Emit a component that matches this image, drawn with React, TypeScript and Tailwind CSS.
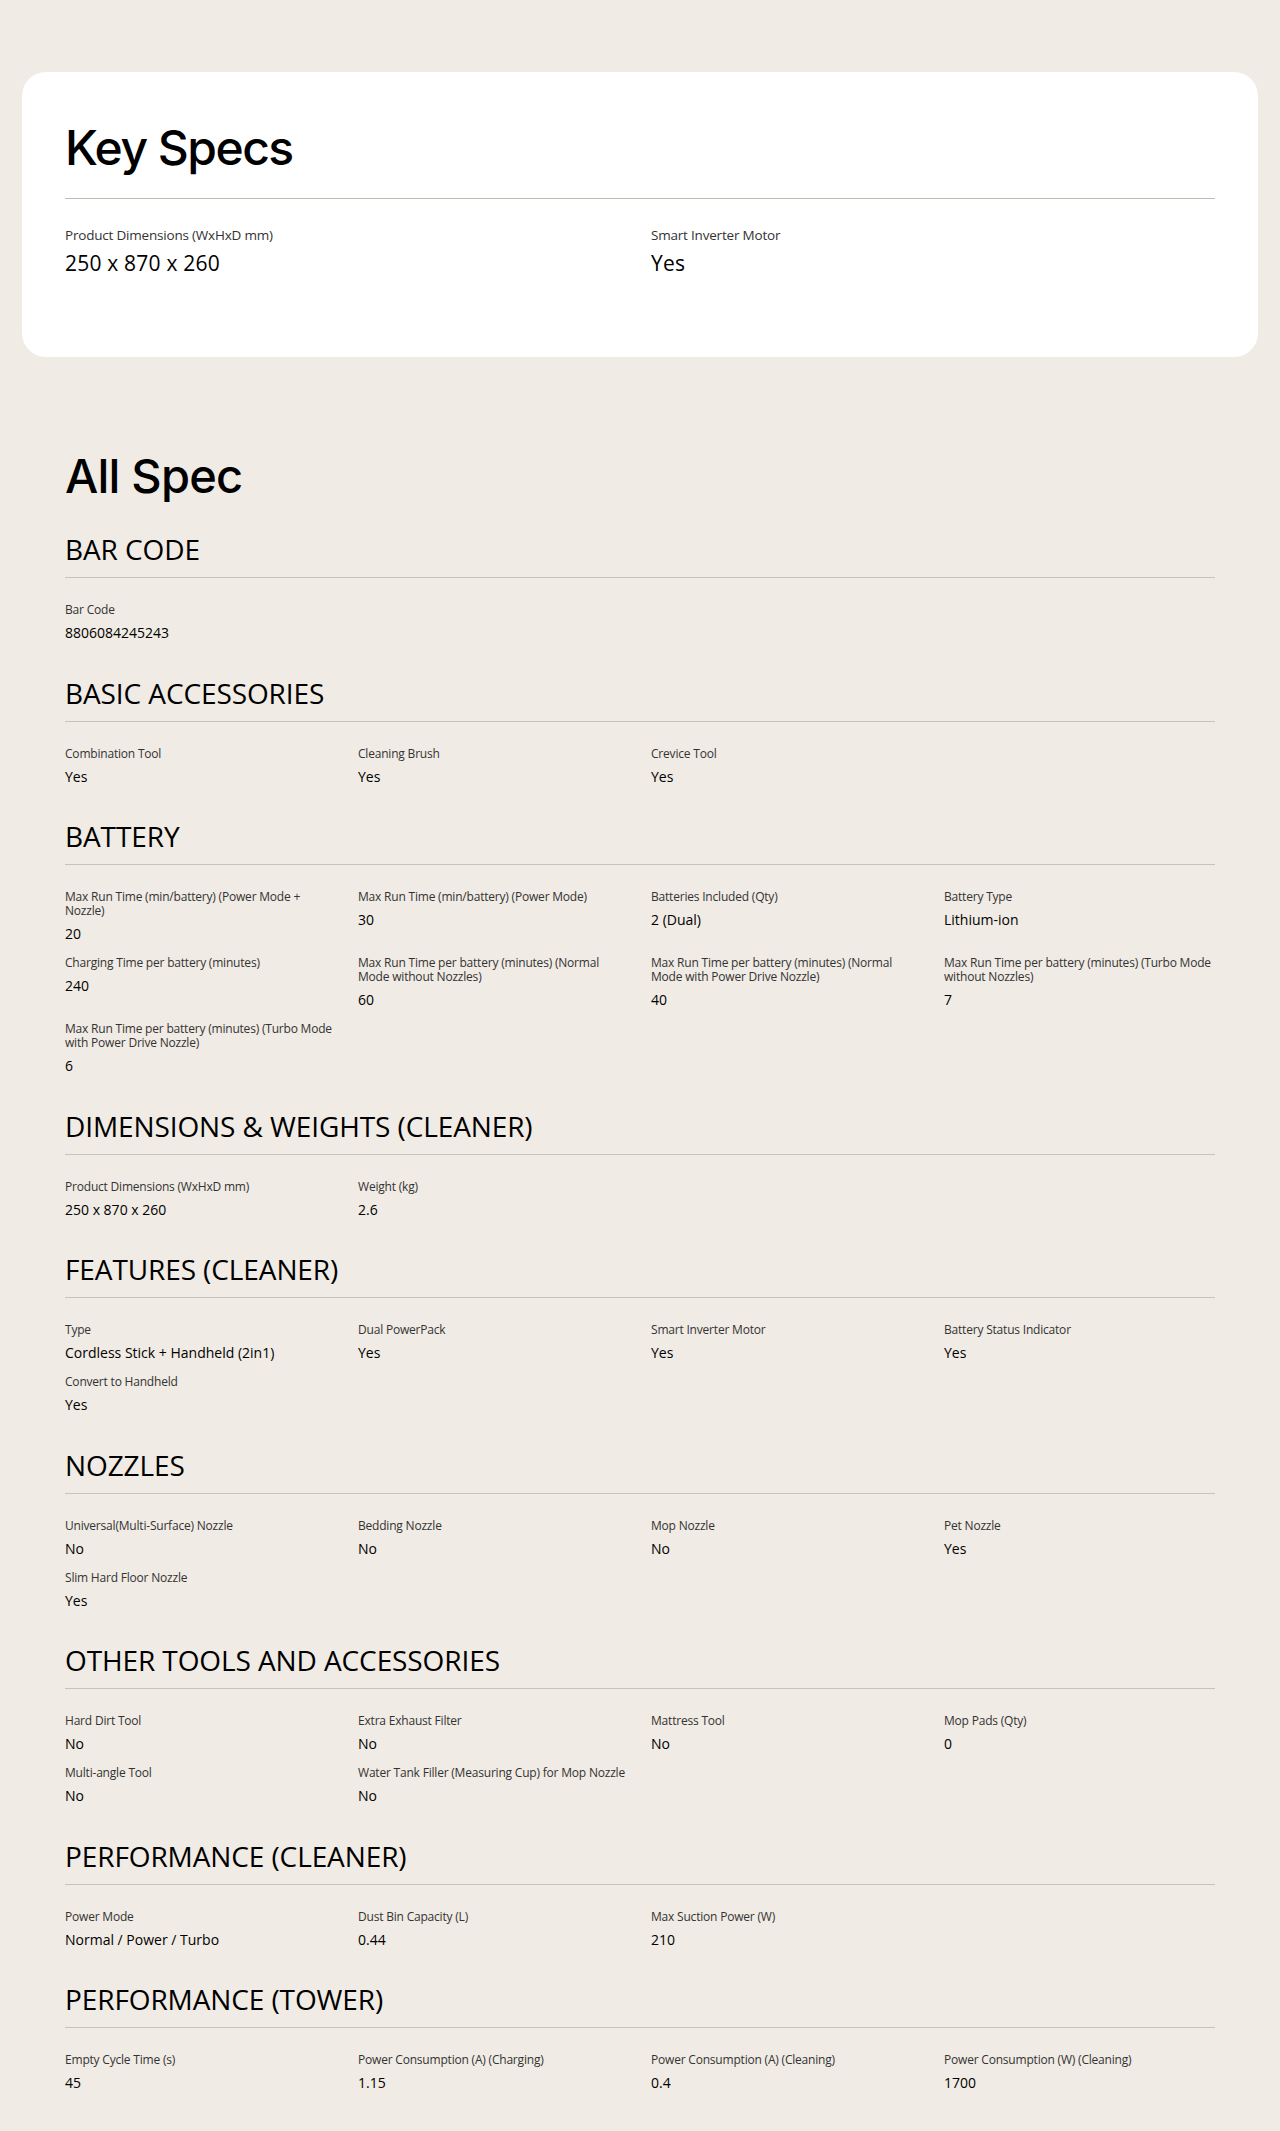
type Spec = { label: string; value: string };
type Section = { title: string; specs: Spec[] };

const keySpecs: Spec[] = [
  { label: "Product Dimensions (WxHxD mm)", value: "250 x 870 x 260" },
  { label: "Smart Inverter Motor", value: "Yes" },
];

const sections: Section[] = [
  { title: "BAR CODE", specs: [{ label: "Bar Code", value: "8806084245243" }] },
  {
    title: "BASIC ACCESSORIES",
    specs: [
      { label: "Combination Tool", value: "Yes" },
      { label: "Cleaning Brush", value: "Yes" },
      { label: "Crevice Tool", value: "Yes" },
    ],
  },
  {
    title: "BATTERY",
    specs: [
      { label: "Max Run Time (min/battery) (Power Mode + Nozzle)", value: "20" },
      { label: "Max Run Time (min/battery) (Power Mode)", value: "30" },
      { label: "Batteries Included (Qty)", value: "2 (Dual)" },
      { label: "Battery Type", value: "Lithium-ion" },
      { label: "Charging Time per battery (minutes)", value: "240" },
      { label: "Max Run Time per battery (minutes) (Normal Mode without Nozzles)", value: "60" },
      { label: "Max Run Time per battery (minutes) (Normal Mode with Power Drive Nozzle)", value: "40" },
      { label: "Max Run Time per battery (minutes) (Turbo Mode without Nozzles)", value: "7" },
      { label: "Max Run Time per battery (minutes) (Turbo Mode with Power Drive Nozzle)", value: "6" },
    ],
  },
  {
    title: "DIMENSIONS & WEIGHTS (CLEANER)",
    specs: [
      { label: "Product Dimensions (WxHxD mm)", value: "250 x 870 x 260" },
      { label: "Weight (kg)", value: "2.6" },
    ],
  },
  {
    title: "FEATURES (CLEANER)",
    specs: [
      { label: "Type", value: "Cordless Stick + Handheld (2in1)" },
      { label: "Dual PowerPack", value: "Yes" },
      { label: "Smart Inverter Motor", value: "Yes" },
      { label: "Battery Status Indicator", value: "Yes" },
      { label: "Convert to Handheld", value: "Yes" },
    ],
  },
  {
    title: "NOZZLES",
    specs: [
      { label: "Universal(Multi-Surface) Nozzle", value: "No" },
      { label: "Bedding Nozzle", value: "No" },
      { label: "Mop Nozzle", value: "No" },
      { label: "Pet Nozzle", value: "Yes" },
      { label: "Slim Hard Floor Nozzle", value: "Yes" },
    ],
  },
  {
    title: "OTHER TOOLS AND ACCESSORIES",
    specs: [
      { label: "Hard Dirt Tool", value: "No" },
      { label: "Extra Exhaust Filter", value: "No" },
      { label: "Mattress Tool", value: "No" },
      { label: "Mop Pads (Qty)", value: "0" },
      { label: "Multi-angle Tool", value: "No" },
      { label: "Water Tank Filler (Measuring Cup) for Mop Nozzle", value: "No" },
    ],
  },
  {
    title: "PERFORMANCE (CLEANER)",
    specs: [
      { label: "Power Mode", value: "Normal / Power / Turbo" },
      { label: "Dust Bin Capacity (L)", value: "0.44" },
      { label: "Max Suction Power (W)", value: "210" },
    ],
  },
  {
    title: "PERFORMANCE (TOWER)",
    specs: [
      { label: "Empty Cycle Time (s)", value: "45" },
      { label: "Power Consumption (A) (Charging)", value: "1.15" },
      { label: "Power Consumption (A) (Cleaning)", value: "0.4" },
      { label: "Power Consumption (W) (Cleaning)", value: "1700" },
    ],
  },
];

const SpecSection = ({ title, specs }: Section) => {
  return (
    <div className="mb-[31.5px]">
      <h3 className="text-[28px] leading-[36px] tracking-[-0.1px] text-black">{title}</h3>
      <div className="mt-[10px] border-t border-[#c6c3bc]" />
      <div className="mt-[25px] grid grid-cols-4 gap-x-[22px] gap-y-[12px]">
        {specs.map((spec) => (
          <div key={spec.label} className="flex flex-col">
            <p className="text-[12px] leading-[14px] tracking-[-0.2px] text-[#333333]">{spec.label}</p>
            <p className="mt-[6px] text-[14px] leading-[20px] text-black">{spec.value}</p>
          </div>
        ))}
      </div>
    </div>
  );
};

export default function App() {
  return (
    <div
      className="min-h-[2131px] bg-[#f0ebe4] pt-[72px] pb-[10px]"
      style={{ fontFamily: '"Open Sans", "Noto Sans", sans-serif' }}
    >
      <div className="mx-[22px] rounded-[24px] bg-white px-[43px] pt-[48px] pb-[80px]">
        <h2
          className="text-[48px] leading-[56px] font-medium tracking-[-1.5px] text-black"
          style={{ fontFamily: "Inter, sans-serif" }}
        >
          Key Specs
        </h2>
        <div className="mt-[22px] border-t border-[#bdbcae]" />
        <div className="mt-[26px] grid grid-cols-2 gap-x-[22px]">
          {keySpecs.map((spec) => (
            <div key={spec.label} className="flex flex-col">
              <p className="text-[13.5px] leading-[20px] tracking-[-0.2px] text-[#333333]">{spec.label}</p>
              <p className="mt-[4px] text-[21px] leading-[28px] tracking-[0.2px] text-black">{spec.value}</p>
            </div>
          ))}
        </div>
      </div>

      <div className="mt-[91px] px-[65px]">
        <h2
          className="text-[47px] leading-[56px] font-medium tracking-[-0.8px] text-black"
          style={{ fontFamily: "Inter, sans-serif" }}
        >
          All Spec
        </h2>
        <div className="mt-[27px]">
          {sections.map((section) => (
            <SpecSection key={section.title} title={section.title} specs={section.specs} />
          ))}
        </div>
      </div>
    </div>
  );
}
